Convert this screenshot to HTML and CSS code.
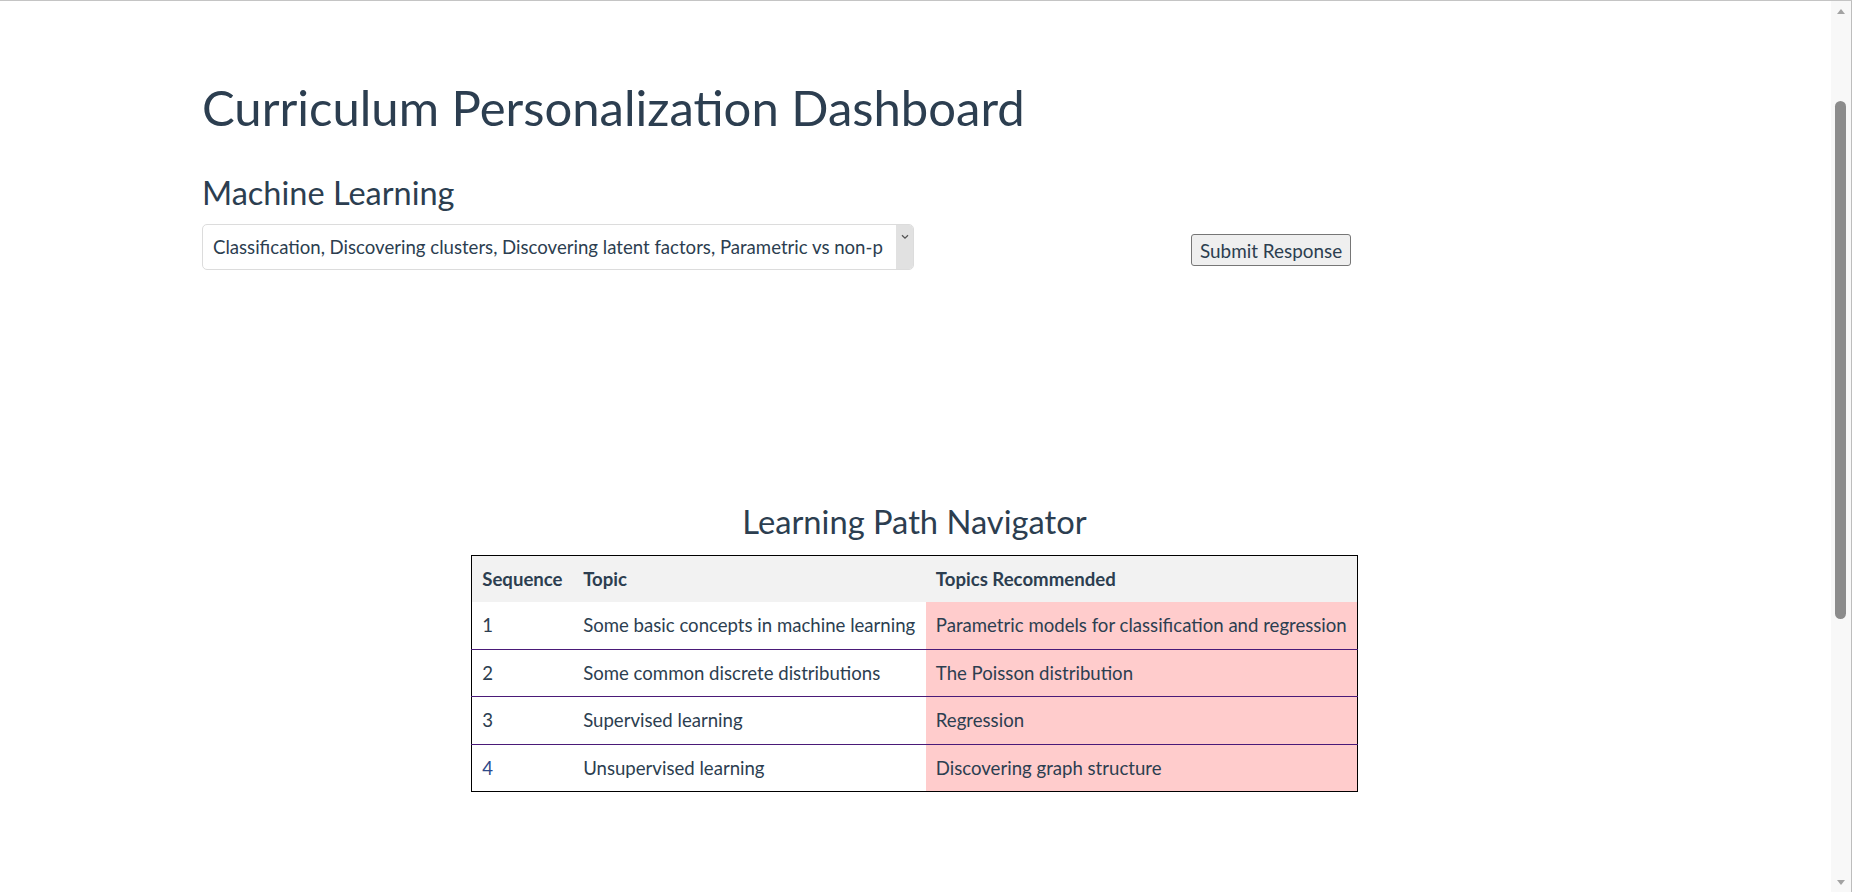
FILE: index.html
```html
<!DOCTYPE html>
<html lang="en">
<head>
<meta charset="utf-8">
<title>Curriculum Personalization Dashboard</title>
<link rel="stylesheet" href="styles.css">
</head>
<body>
<div class="page">
  <h1 class="title">Curriculum Personalization Dashboard</h1>
  <h2 class="subject">Machine Learning</h2>
  <div class="controls">
    <div class="select">
      <div class="select-value"><span class="select-text">Classification, Discovering clusters, Discovering latent factors, Parametric vs non-parametric models, Regression</span></div>
      <div class="select-arrow">
        <svg width="8" height="6" viewBox="0 0 8 6"><path d="M1 1.2 L4 4.2 L7 1.2" fill="none" stroke="#555" stroke-width="1.3"/></svg>
      </div>
    </div>
    <button class="submit" type="button">Submit Response</button>
  </div>

  <section class="navigator">
    <h3 class="nav-title">Learning Path Navigator</h3>
    <table class="path-table">
      <thead>
        <tr><th>Sequence</th><th>Topic</th><th>Topics Recommended</th></tr>
      </thead>
      <tbody>
        <tr><td>1</td><td>Some basic concepts in machine learning</td><td class="rec">Parametric models for classification and regression</td></tr>
        <tr><td>2</td><td>Some common discrete distributions</td><td class="rec">The Poisson distribution</td></tr>
        <tr><td>3</td><td>Supervised learning</td><td class="rec">Regression</td></tr>
        <tr><td class="seq-link">4</td><td>Unsupervised learning</td><td class="rec">Discovering graph structure</td></tr>
      </tbody>
    </table>
  </section>
  <div class="bottom-space"></div>
</div>

<div class="fake-scrollbar" aria-hidden="true">
  <div class="sb-arrow sb-up"></div>
  <div class="sb-thumb"></div>
  <div class="sb-arrow sb-down"></div>
</div>
</body>
</html>
```

FILE: styles.css
```css
html {
  border-top: 1px solid #c4c4c4;
}
body {
  margin: 0;
  font-family: Lato, "Open Sans", Arial, sans-serif;
  color: #2c3e50;
  background: #ffffff;
}
.page {
  padding-top: 77px;
  padding-left: 202px;
  width: 1627px;
}
.title {
  margin: 0;
  font-size: 49px;
  line-height: 58px;
  font-weight: 400;
}
.subject {
  margin: 37px 0 0;
  font-size: 32.5px;
  line-height: 40px;
  font-weight: 400;
}
.controls {
  display: flex;
  align-items: flex-start;
  margin-top: 11px;
}
.select {
  display: flex;
  width: 712px;
  height: 46px;
  box-sizing: border-box;
  border: 1px solid #dcdcdc;
  border-radius: 5px;
  overflow: hidden;
  background: #fff;
}
.select-value {
  flex: 1;
  min-width: 0;
  padding: 0 13px 0 10px;
  display: flex;
}
.select-text {
  flex: 1;
  min-width: 0;
  overflow: hidden;
  white-space: nowrap;
  font-size: 18.6px;
  line-height: 44px;
}
.select-arrow {
  width: 17px;
  background: #e1e1e1;
  display: flex;
  justify-content: center;
  padding-top: 9px;
  box-sizing: border-box;
}
.select-arrow svg {
  display: block;
}
.submit {
  margin: 10px 0 0 277px;
  height: 32px;
  padding: 0 8px;
  font-family: Lato, "Open Sans", Arial, sans-serif;
  font-size: 18.9px;
  color: #2c3e50;
  background: #efefef;
  border: 1px solid #767676;
  border-radius: 3px;
}
.navigator {
  margin: 232px 0 0 -202px;
  width: 1829px;
  text-align: center;
}
.nav-title {
  margin: 0 0 13px;
  font-size: 32.7px;
  line-height: 40px;
  font-weight: 400;
}
.path-table {
  margin: 0 auto;
  border-collapse: collapse;
  border: 1px solid #000;
  text-align: left;
  font-size: 18.6px;
}
.path-table th {
  background: #f2f2f2;
  font-weight: 700;
  height: 46.5px;
  padding: 0 10.3px;
  box-sizing: border-box;
}
.path-table td {
  height: 47.4px;
  padding: 0 10.3px;
  box-sizing: border-box;
  white-space: nowrap;
}
.path-table tbody tr + tr td {
  border-top: 1px solid #4a1a78;
}
.path-table td.rec {
  background: #ffcccc;
}
.path-table td.seq-link {
  color: #2f4a8a;
}
.bottom-space {
  height: 620px;
}

/* browser scrollbar as seen in the capture */
.fake-scrollbar {
  position: fixed;
  top: 1px;
  right: 0;
  bottom: 0;
  width: 20px;
  background: #f8f8f8;
  border-right: 1px solid #bdbdbd;
}
.sb-thumb {
  position: absolute;
  top: 100px;
  left: 4px;
  width: 11px;
  height: 518px;
  border-radius: 6px;
  background: #8c8c8c;
}
.sb-arrow {
  position: absolute;
  left: 6px;
  width: 0;
  height: 0;
  border-left: 4px solid transparent;
  border-right: 4px solid transparent;
}
.sb-up {
  top: 8px;
  border-bottom: 5px solid #a3a3a3;
}
.sb-down {
  bottom: 7px;
  border-top: 5px solid #a3a3a3;
}
```
